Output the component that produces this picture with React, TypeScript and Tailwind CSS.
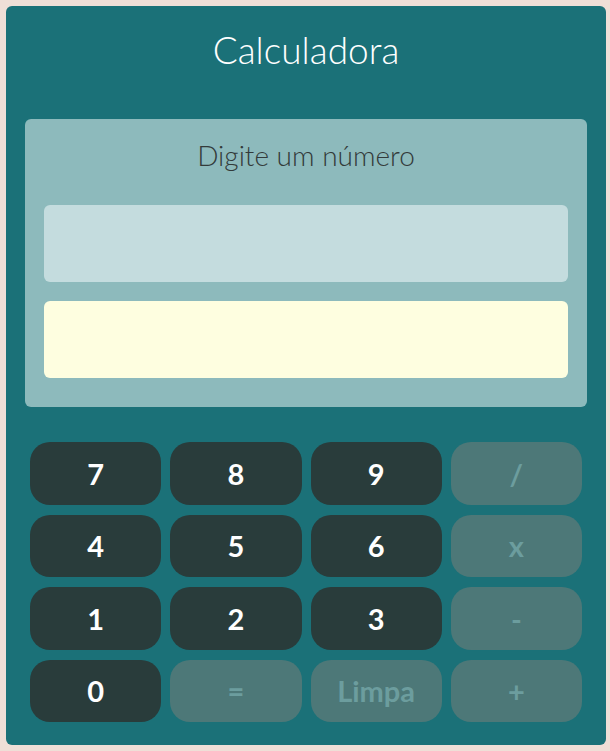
const keys: { label: string; active: boolean }[] = [
  { label: '7', active: true },
  { label: '8', active: true },
  { label: '9', active: true },
  { label: '/', active: false },
  { label: '4', active: true },
  { label: '5', active: true },
  { label: '6', active: true },
  { label: 'x', active: false },
  { label: '1', active: true },
  { label: '2', active: true },
  { label: '3', active: true },
  { label: '-', active: false },
  { label: '0', active: true },
  { label: '=', active: false },
  { label: 'Limpa', active: false },
  { label: '+', active: false },
];

export default function App() {
  return (
    <div className="min-h-screen bg-[#efdfd7] p-[6px] font-['Lato','Noto_Sans',sans-serif]">
      <div className="w-[600px] rounded-[6px] bg-[#1b7178] pb-[23px]">
        <h1 className="pt-[21px] mb-[47px] text-center text-[37px] leading-[45px] font-light text-white">
          Calculadora
        </h1>

        <div className="mx-[19px] rounded-[6px] bg-[#8dbabc] px-[19px] pt-[18px] pb-[29px]">
          <p className="mb-[32px] text-center text-[28px] leading-[36px] font-light text-[#333a3a]">
            Digite um número
          </p>
          <div className="flex flex-col gap-[19px]">
            <input
              readOnly
              className="h-[77px] w-full rounded-[6px] bg-[#c4dcde] outline-none"
            />
            <input
              readOnly
              className="h-[77px] w-full rounded-[6px] bg-[#fefee0] outline-none"
            />
          </div>
        </div>

        <div className="mt-[35px] mx-[24px] grid grid-cols-4 gap-x-[9px] gap-y-[10px]">
          {keys.map((k) => (
            <button
              key={k.label}
              disabled={!k.active}
              className={`h-[62.5px] rounded-[20px] text-[29px] font-bold leading-none ${
                k.active ? 'bg-[#293c3b] text-white' : 'bg-[#4d7878] text-[#6c9d9e]'
              }`}
            >
              {k.label}
            </button>
          ))}
        </div>
      </div>
    </div>
  );
}
